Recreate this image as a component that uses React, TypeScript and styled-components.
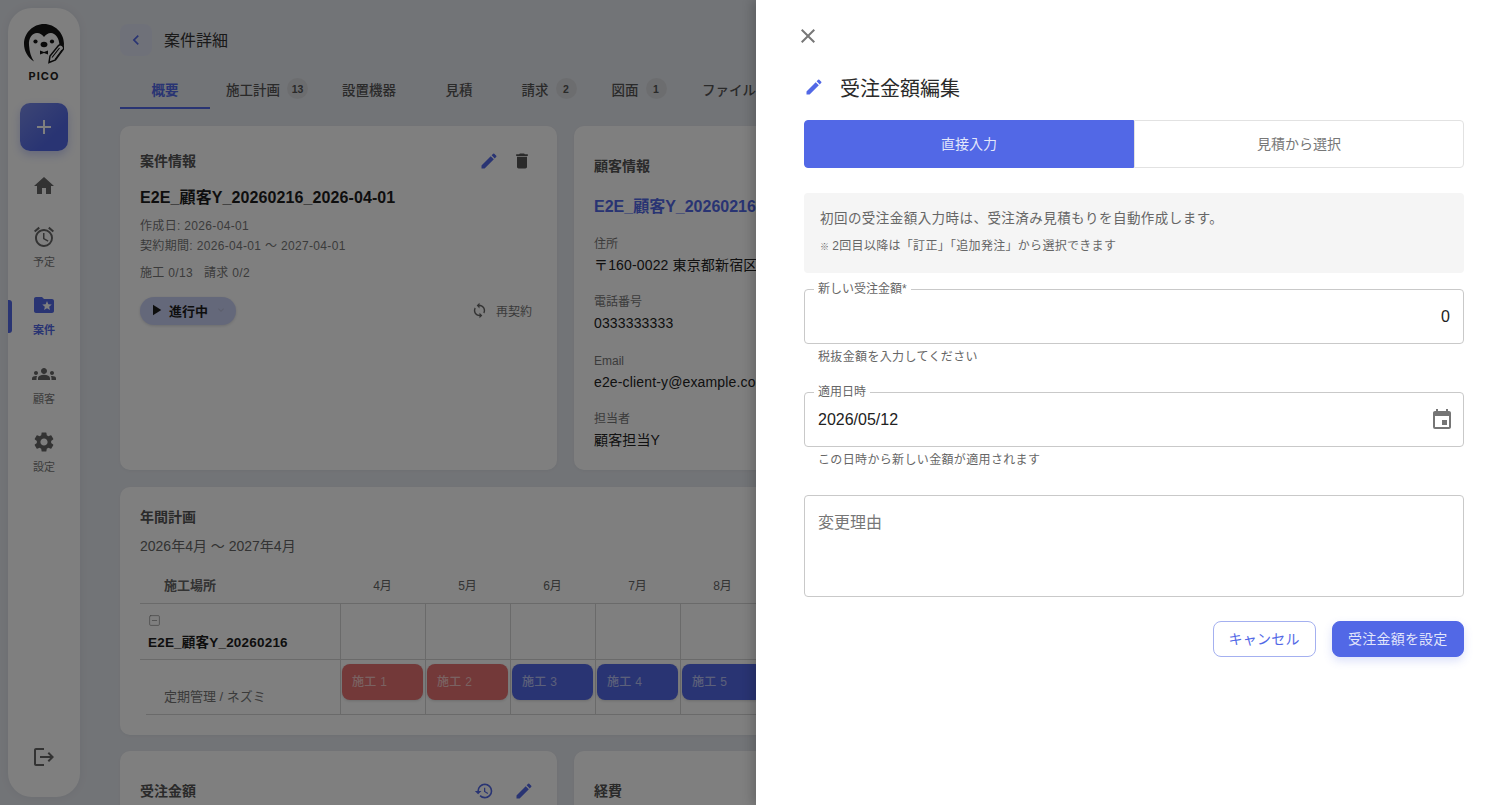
import React from 'react';
import styled, { createGlobalStyle } from 'styled-components';
import {
  MdAccessAlarm, MdAdd, MdChevronLeft, MdClose, MdDelete, MdEdit, MdEvent, MdExpandMore, MdFolderSpecial,
  MdGroups, MdHistory, MdHome, MdLogout, MdPlayArrow, MdSettings, MdSync,
} from 'react-icons/md';
import { SquareMinus } from 'lucide-react';

const primary = '#5268e6';

const Global = createGlobalStyle`
  html, body { margin: 0; padding: 0; height: 100%; overflow: hidden; }
  body { font-family: "Liberation Sans", "Noto Sans CJK JP", sans-serif; background: #e5e8ee; color: #212121; }
  * { box-sizing: border-box; }
`;

const Page = styled.div`
  display: flex;
  width: 1512px;
  height: 805px;
  overflow: hidden;
  position: relative;
`;

const Side = styled.nav`
  flex: none;
  width: 72px;
  height: 789px;
  margin: 8px 0 0 8px;
  background: #fff;
  border-radius: 24px;
  box-shadow: 0 0 8px rgba(60, 70, 90, 0.08);
  display: flex;
  flex-direction: column;
  align-items: center;
  padding-top: 16px;
  position: relative;
`;

const LogoText = styled.div`
  font-family: Inter, "Liberation Sans", sans-serif;
  font-size: 11px;
  font-weight: 700;
  letter-spacing: 1px;
  line-height: 13px;
  margin-top: 6px;
  color: #222;
`;

const AddButton = styled.div`
  width: 48px;
  height: 48px;
  margin-top: 20px;
  border-radius: 10px;
  background: linear-gradient(135deg, #7a8cea, ${primary} 70%);
  box-shadow: 0 4px 10px rgba(82, 104, 230, 0.3);
  color: #fff;
  display: flex;
  align-items: center;
  justify-content: center;
  font-size: 24px;
`;

const NavItem = styled.div<{ $active?: boolean; $gap: number }>`
  margin-top: ${p => p.$gap}px;
  display: flex;
  flex-direction: column;
  align-items: center;
  font-size: 11px;
  line-height: 14px;
  color: ${p => (p.$active ? primary : '#777')};
  font-weight: ${p => (p.$active ? 700 : 400)};
  svg { font-size: 24px; color: ${p => (p.$active ? primary : '#666')}; display: block; margin-bottom: 6px; }
`;

const ActiveMark = styled.div`
  position: absolute;
  left: 0;
  top: 292px;
  width: 4px;
  height: 33px;
  background: ${primary};
  border-radius: 0 3px 3px 0;
`;

const Logout = styled.div`
  margin-top: auto;
  margin-bottom: 28px;
  color: #666;
  font-size: 24px;
  line-height: 0;
`;

const Main = styled.main`
  flex: none;
  width: 1392px;
  padding: 24px 0 0 40px;
`;

const Header = styled.header`
  display: flex;
  align-items: center;
  gap: 12px;
  height: 32px;
`;

const BackButton = styled.div`
  width: 32px;
  height: 32px;
  border-radius: 8px;
  background: #dfe3f3;
  color: ${primary};
  display: flex;
  align-items: center;
  justify-content: center;
  font-size: 20px;
`;

const PageTitle = styled.h1`
  margin: 0 0 2px;
  font-size: 16px;
  font-weight: 400;
  color: #333;
`;

const Tabs = styled.div`
  display: flex;
  margin-top: 16px;
  height: 37px;
`;

const Tab = styled.div<{ $active?: boolean }>`
  min-width: 90px;
  height: 37px;
  flex: none;
  padding: 0 16px 2px;
  display: flex;
  align-items: center;
  justify-content: center;
  gap: 7px;
  font-size: 13.5px;
  white-space: nowrap;
  font-weight: ${p => (p.$active ? 700 : 500)};
  color: ${p => (p.$active ? primary : '#555')};
  border-bottom: 2px solid ${p => (p.$active ? primary : 'transparent')};
`;

const Badge = styled.span`
  min-width: 21px;
  height: 21px;
  border-radius: 50%;
  background: #d9dbdf;
  color: #555;
  font-size: 10.5px;
  font-weight: 700;
  display: flex;
  align-items: center;
  justify-content: center;
`;

const Grid = styled.div`
  display: grid;
  grid-template-columns: 437px 437px 437px;
  grid-template-rows: 344px 248px 200px;
  gap: 16.5px 17px;
  margin-top: 17px;
`;

const Card = styled.section<{ $wide?: boolean }>`
  background: #fff;
  border-radius: 10px;
  padding: 20px;
  box-shadow: 0 1px 3px rgba(60, 70, 90, 0.05);
  grid-column: ${p => (p.$wide ? '1 / -1' : 'auto')};
  min-width: 0;
  overflow: hidden;
`;

const CardHead = styled.div<{ $top?: number }>`
  display: flex;
  align-items: center;
  justify-content: space-between;
  height: 30px;
  margin-top: ${p => p.$top ?? 0}px;
`;

const CardTitle = styled.h2<{ $top?: number }>`
  margin: ${p => p.$top ?? 0}px 0 0;
  font-size: 14px;
  font-weight: 700;
  line-height: 20px;
  color: #555;
`;

const IconRow = styled.div<{ $gap: number; $end: number }>`
  display: flex;
  gap: ${p => p.$gap}px;
  margin-right: ${p => p.$end}px;
  font-size: 20px;
  line-height: 0;
`;

const IconTint = styled.span<{ $muted?: boolean }>`
  color: ${p => (p.$muted ? '#555' : primary)};
  display: block;
`;

const CaseName = styled.div`
  font-size: 16px;
  font-weight: 700;
  line-height: 22px;
  letter-spacing: 0.1px;
  margin-top: 11px;
  color: #1c1c1c;
`;

const Meta = styled.div<{ $top: number }>`
  font-size: 12px;
  line-height: 20px;
  letter-spacing: 0.33px;
  margin-top: ${p => p.$top}px;
  color: #777;
`;

const StatusRow = styled.div`
  display: flex;
  align-items: center;
  justify-content: space-between;
  margin-top: 14px;
`;

const StatusChip = styled.div`
  display: flex;
  align-items: center;
  width: 96px;
  height: 28px;
  border-radius: 14px;
  background: #c9d0f5;
  padding: 0 0 2px 7px;
  font-size: 13px;
  font-weight: 700;
  color: #1c1c1c;
  box-shadow: 0 1px 3px rgba(60, 70, 90, 0.2);
  svg:first-child { font-size: 18px; margin-right: 4px; }
  svg:last-child { font-size: 12px; margin-left: 7px; color: #b9bedb; }
`;

const Renew = styled.div`
  display: flex;
  align-items: center;
  gap: 8px;
  margin: 0 5px 2px 0;
  font-size: 12px;
  color: #777;
  svg { font-size: 17px; color: #666; }
`;

const CustomerLink = styled.div`
  font-size: 16px;
  font-weight: 700;
  line-height: 22px;
  color: ${primary};
  margin-top: 20px;
  white-space: nowrap;
`;

const Info = styled.div<{ $top: number }>`
  margin-top: ${p => p.$top}px;
`;

const InfoLabel = styled.div`
  font-size: 12px;
  line-height: 16px;
  color: #777;
`;

const InfoValue = styled.div`
  font-size: 14px;
  line-height: 20px;
  letter-spacing: 0.15px;
  margin-top: 3px;
  color: #222;
  white-space: nowrap;
`;

const Period = styled.div`
  font-size: 14px;
  line-height: 20px;
  margin-top: 9px;
  color: #666;
`;

const Table = styled.div`
  display: grid;
  grid-template-columns: 200px repeat(13, 85px);
  grid-template-rows: 34px 56px 55px;
  margin-top: 14px;
`;

const HeadCell = styled.div<{ $left?: boolean }>`
  display: flex;
  align-items: center;
  justify-content: ${p => (p.$left ? 'flex-start' : 'center')};
  padding: 0 0 4px ${p => (p.$left ? 24 : 0)}px;
  font-size: ${p => (p.$left ? 13 : 12)}px;
  font-weight: ${p => (p.$left ? 700 : 400)};
  color: #666;
  border-bottom: 1px solid #d4d4d4;
`;

const SiteCell = styled.div`
  padding: 10px 0 0 8px;
  border-bottom: 1px solid #d4d4d4;
  font-size: 13.5px;
  letter-spacing: 0.2px;
  font-weight: 700;
  color: #1c1c1c;
  svg { display: block; color: #888; margin-bottom: 4px; }
`;

const ItemCell = styled.div`
  padding: 26px 0 0 24px;
  font-size: 13px;
  color: #777;
  position: relative;
  &::after {
    content: '';
    position: absolute;
    left: 6px;
    right: 0;
    bottom: 0;
    border-bottom: 1px solid #d4d4d4;
  }
`;

const MonthCell = styled.div`
  border-left: 1px solid #d4d4d4;
  border-bottom: 1px solid #d4d4d4;
  padding: 4px 2px 0 1px;
`;

const Chip = styled.div<{ $done?: boolean }>`
  width: 81px;
  height: 36px;
  border-radius: 8px;
  background: ${p => (p.$done ? '#e67272' : primary)};
  color: rgba(255, 255, 255, 0.6);
  font-size: 12px;
  letter-spacing: 0.3px;
  font-weight: 500;
  display: flex;
  align-items: center;
  padding: 0 0 2px 10px;
  box-shadow: 0 1px 3px rgba(0, 0, 0, 0.15);
`;

const Backdrop = styled.div`
  position: absolute;
  inset: 0;
  background: rgba(0, 0, 0, 0.5);
`;

const Drawer = styled.aside`
  position: absolute;
  top: 0;
  right: 0;
  bottom: 0;
  width: 756px;
  background: #fff;
  padding: 24px 48px;
  box-shadow: -4px 0 10px rgba(0, 0, 0, 0.18);
`;

const CloseButton = styled.div`
  width: 24px;
  height: 24px;
  margin-left: -8px;
  font-size: 24px;
  line-height: 0;
  color: #777;
`;

const DrawerTitleRow = styled.div`
  display: flex;
  align-items: center;
  height: 32px;
  margin-top: 23px;
  svg { font-size: 20px; color: ${primary}; margin-right: 16px; }
`;

const DrawerTitle = styled.h2`
  margin: 0;
  font-size: 20px;
  font-weight: 400;
  color: #2a2a2a;
`;

const Segments = styled.div`
  display: grid;
  grid-template-columns: 1fr 1fr;
  height: 48px;
  margin-top: 17px;
`;

const Segment = styled.div<{ $active?: boolean }>`
  display: flex;
  align-items: center;
  justify-content: center;
  padding-bottom: 2px;
  font-size: 14px;
  color: ${p => (p.$active ? 'rgba(255,255,255,0.85)' : '#777')};
  background: ${p => (p.$active ? primary : '#fff')};
  border: 1px solid ${p => (p.$active ? primary : '#e2e2e2')};
  border-radius: ${p => (p.$active ? '4px 0 0 4px' : '0 4px 4px 0')};
`;

const Notice = styled.div`
  margin-top: 25px;
  height: 80px;
  background: #f5f5f5;
  border-radius: 4px;
  padding: 16px;
`;

const NoticeMain = styled.div`
  font-size: 13.5px;
  letter-spacing: 0.45px;
  line-height: 20px;
  color: #666;
`;

const NoticeSub = styled.div`
  font-size: 12px;
  letter-spacing: 0.3px;
  line-height: 16px;
  margin-top: 9px;
  color: #666;
`;

const NoteMark = styled.span`
  font-size: 9px;
  margin-right: 3px;
`;

const Field = styled.fieldset<{ $top: number; $h: number }>`
  margin: ${p => p.$top}px 0 0;
  padding: 0 13px;
  height: ${p => p.$h}px;
  border: 1px solid #c9c9c9;
  border-radius: 4px;
  display: flex;
  align-items: center;
  justify-content: space-between;
  min-width: 0;
  position: relative;
`;

const Legend = styled.legend`
  font-size: 12px;
  line-height: 12px;
  padding: 0 4px;
  margin-left: -4px;
  color: #666;
`;

const FieldValue = styled.div<{ $right?: boolean }>`
  flex: 1;
  font-size: 16px;
  line-height: 24px;
  color: #222;
  text-align: ${p => (p.$right ? 'right' : 'left')};
  margin-top: -4px;
`;

const FieldIcon = styled.div`
  position: absolute;
  right: 9px;
  top: 10px;
  font-size: 24px;
  line-height: 0;
  color: #757575;
`;

const Helper = styled.div`
  font-size: 12px;
  letter-spacing: 0.35px;
  line-height: 16px;
  margin: 5px 0 0 14px;
  color: #666;
`;

const TextArea = styled.div`
  margin-top: 27px;
  height: 102px;
  border: 1px solid #c9c9c9;
  border-radius: 4px;
  padding: 15px 13px;
  font-size: 16px;
  line-height: 24px;
  color: #777;
`;

const Actions = styled.div`
  display: flex;
  justify-content: flex-end;
  gap: 16px;
  margin-top: 24px;
`;

const Button = styled.div<{ $solid?: boolean }>`
  height: 36px;
  padding: 0 ${p => (p.$solid ? 15.5 : 15)}px 2px;
  border-radius: 8px;
  display: flex;
  align-items: center;
  font-size: 14px;
  letter-spacing: 0.2px;
  border: 1px solid ${p => (p.$solid ? primary : '#a4b0f0')};
  background: ${p => (p.$solid ? primary : '#fff')};
  color: ${p => (p.$solid ? 'rgba(255,255,255,0.85)' : primary)};
  box-shadow: ${p => (p.$solid ? '0 4px 10px rgba(82,104,230,0.2)' : 'none')};
`;

const Penguin = () => (
  <svg width="40" height="40" viewBox="0 0 40 40">
    <path
      d="M10 37.5 C4 34 0 27 0 20 C0 9 9 0 20 0 C31 0 40 9 40 20 L39.5 24 L35.5 22 C35.5 14 31 9 27 9 C24 9 21.5 11 20 13 C18.5 11 16 9 13 9 C8 9 4.5 14 5 21 C5.5 28 7 33 10 37.5Z"
      fill="#151515"
    />
    <circle cx="11.5" cy="17.5" r="2.1" fill="#151515" />
    <circle cx="28" cy="17.5" r="2.1" fill="#151515" />
    <ellipse cx="20" cy="20.5" rx="3.4" ry="2.8" fill="#151515" />
    <path d="M16 26.5 L20 28 L24 26.5 L24 30.5 L20 29 L16 30.5 Z" fill="#151515" />
    <path d="M25 38.5 L26 32 L34.5 21.5 C36.5 19.5 40.5 22 39.5 25 L31.5 36 Z" fill="#fff" stroke="#151515" strokeWidth="1.5" />
    <path d="M28 33.5 L35.5 24 M31 35.5 L38 26" stroke="#151515" strokeWidth="1.2" />
  </svg>
);

const months = ['4月', '5月', '6月', '7月', '8月', '9月', '10月', '11月', '12月', '1月', '2月', '3月', '4月'];

export default function App() {
  return (
    <Page>
      <Global />
      <Side>
        <Penguin />
        <LogoText>PICO</LogoText>
        <AddButton><MdAdd /></AddButton>
        <NavItem $gap={23}><MdHome /></NavItem>
        <NavItem $gap={21}><MdAccessAlarm />予定</NavItem>
        <ActiveMark />
        <NavItem $active $gap={24}><MdFolderSpecial />案件</NavItem>
        <NavItem $gap={25}><MdGroups />顧客</NavItem>
        <NavItem $gap={24}><MdSettings />設定</NavItem>
        <Logout><MdLogout /></Logout>
      </Side>
      <Main>
        <Header>
          <BackButton><MdChevronLeft /></BackButton>
          <PageTitle>案件詳細</PageTitle>
        </Header>
        <Tabs>
          <Tab $active>概要</Tab>
          <Tab>施工計画<Badge>13</Badge></Tab>
          <Tab>設置機器</Tab>
          <Tab>見積</Tab>
          <Tab>請求<Badge>2</Badge></Tab>
          <Tab>図面<Badge>1</Badge></Tab>
          <Tab>ファイル</Tab>
        </Tabs>
        <Grid>
          <Card>
            <CardHead>
              <CardTitle>案件情報</CardTitle>
              <IconRow $gap={13} $end={5}>
                <IconTint><MdEdit /></IconTint>
                <IconTint $muted><MdDelete /></IconTint>
              </IconRow>
            </CardHead>
            <CaseName>E2E_顧客Y_20260216_2026-04-01</CaseName>
            <Meta $top={7}>作成日: 2026-04-01<br />契約期間: 2026-04-01 〜 2027-04-01</Meta>
            <Meta $top={7}>施工 0/13 &nbsp; 請求 0/2</Meta>
            <StatusRow>
              <StatusChip><MdPlayArrow />進行中<MdExpandMore /></StatusChip>
              <Renew><MdSync />再契約</Renew>
            </StatusRow>
          </Card>
          <Card>
            <CardTitle $top={10}>顧客情報</CardTitle>
            <CustomerLink>E2E_顧客Y_20260216</CustomerLink>
            <Info $top={18}>
              <InfoLabel>住所</InfoLabel>
              <InfoValue>〒160-0022 東京都新宿区</InfoValue>
            </Info>
            <Info $top={19}>
              <InfoLabel>電話番号</InfoLabel>
              <InfoValue>0333333333</InfoValue>
            </Info>
            <Info $top={20}>
              <InfoLabel>Email</InfoLabel>
              <InfoValue>e2e-client-y@example.com</InfoValue>
            </Info>
            <Info $top={19}>
              <InfoLabel>担当者</InfoLabel>
              <InfoValue>顧客担当Y</InfoValue>
            </Info>
          </Card>
          <Card />
          <Card $wide>
            <CardTitle>年間計画</CardTitle>
            <Period>2026年4月 〜 2027年4月</Period>
            <Table>
              <HeadCell $left>施工場所</HeadCell>
              {months.map((m, i) => <HeadCell key={i}>{m}</HeadCell>)}
              <SiteCell>
                <SquareMinus size={13} strokeWidth={1.3} />
                E2E_顧客Y_20260216
              </SiteCell>
              {months.map((_, i) => <MonthCell key={i} />)}
              <ItemCell>定期管理 / ネズミ</ItemCell>
              {months.map((_, i) => (
                <MonthCell key={i}>
                  {i < 5 && <Chip $done={i < 2}>施工 {i + 1}</Chip>}
                </MonthCell>
              ))}
            </Table>
          </Card>
          <Card>
            <CardHead $top={5}>
              <CardTitle>受注金額</CardTitle>
              <IconRow $gap={20} $end={3}>
                <IconTint><MdHistory /></IconTint>
                <IconTint><MdEdit /></IconTint>
              </IconRow>
            </CardHead>
          </Card>
          <Card>
            <CardTitle $top={10}>経費</CardTitle>
          </Card>
          <Card />
        </Grid>
      </Main>
      <Backdrop />
      <Drawer>
        <CloseButton><MdClose /></CloseButton>
        <DrawerTitleRow>
          <MdEdit />
          <DrawerTitle>受注金額編集</DrawerTitle>
        </DrawerTitleRow>
        <Segments>
          <Segment $active>直接入力</Segment>
          <Segment>見積から選択</Segment>
        </Segments>
        <Notice>
          <NoticeMain>初回の受注金額入力時は、受注済み見積もりを自動作成します。</NoticeMain>
          <NoticeSub><NoteMark>※</NoteMark>2回目以降は「訂正」「追加発注」から選択できます</NoticeSub>
        </Notice>
        <Field $top={10} $h={61}>
          <Legend>新しい受注金額*</Legend>
          <FieldValue $right>0</FieldValue>
        </Field>
        <Helper>税抜金額を入力してください</Helper>
        <Field $top={21} $h={61}>
          <Legend>適用日時</Legend>
          <FieldValue>2026/05/12</FieldValue>
          <FieldIcon><MdEvent /></FieldIcon>
        </Field>
        <Helper>この日時から新しい金額が適用されます</Helper>
        <TextArea>変更理由</TextArea>
        <Actions>
          <Button>キャンセル</Button>
          <Button $solid>受注金額を設定</Button>
        </Actions>
      </Drawer>
    </Page>
  );
}
